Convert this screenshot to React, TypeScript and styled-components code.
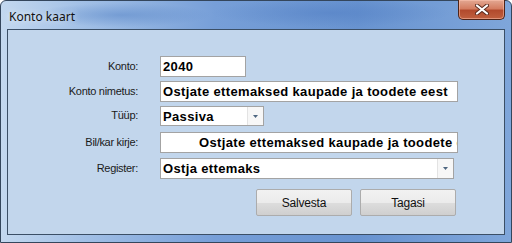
import React from 'react';
import styled, { createGlobalStyle } from 'styled-components';

const GlobalStyle = createGlobalStyle`
    html, body {
        margin: 0;
        padding: 0;
        background: #ffffff;
    }
`;

const Window = styled.div`
    box-sizing: border-box;
    width: 512px;
    height: 243px;
    display: flex;
    flex-direction: column;
    border: 1px solid #34465c;
    border-radius: 6px 6px 0 0;
    padding: 0 6px 7px 6px;
    background:
        radial-gradient(ellipse 90px 12px at 120px 14px, rgba(90, 135, 200, 0.55), transparent),
        radial-gradient(ellipse 120px 14px at 330px 12px, rgba(80, 125, 195, 0.5), transparent),
        linear-gradient(to right, #c3d8ef 0%, #a2c0e6 16%, #779fd8 42%, #6893d0 70%, #7fa6da 100%);
`;

const TitleBar = styled.div`
    height: 28px;
    display: flex;
    justify-content: space-between;
    align-items: flex-start;
    flex-shrink: 0;
`;

const Title = styled.span`
    margin: 7px 0 0 2px;
    font-family: "Noto Sans", "Open Sans", sans-serif;
    font-size: 12px;
    color: #111;
    text-shadow: 0 0 6px rgba(255, 255, 255, 0.9);
`;

const CloseButton = styled.div`
    box-sizing: border-box;
    width: 47px;
    height: 20px;
    margin-top: -1px;
    border: 1px solid #4e2418;
    border-top: none;
    border-radius: 0 0 5px 5px;
    background: linear-gradient(to bottom, #e3a893 0%, #d47d61 45%, #b24a2d 55%, #c0603f 100%);
    box-shadow: inset 0 0 0 1px rgba(255, 200, 180, 0.5);
    display: flex;
    align-items: center;
    justify-content: center;
`;

const Client = styled.div`
    flex: 1;
    border: 1px solid #3b4f66;
    background: #c2d6ec;
    padding-top: 26px;
    display: flex;
    flex-direction: column;
`;

const Form = styled.div`
    display: grid;
    grid-template-columns: 130px auto;
    column-gap: 22px;
    align-items: center;
`;

interface RowProps {
    top?: number;
}

const Label = styled.div<RowProps>`
    margin-top: ${props => props.top || 0}px;
    margin-bottom: 2px;
    text-align: right;
    font-family: "Liberation Sans", Arial, sans-serif;
    font-size: 11px;
    letter-spacing: -0.3px;
    color: #1a1a1a;
`;

interface FieldProps extends RowProps {
    w: number;
    h?: number;
}

const Field = styled.div<FieldProps>`
    box-sizing: border-box;
    margin-top: ${props => props.top || 0}px;
    width: ${props => props.w}px;
    height: ${props => props.h || 21}px;
    border: 1px solid #a3a3a3;
    background: #fff;
    display: flex;
    align-items: center;
    overflow: hidden;
`;

const FieldText = styled.span<{ indent?: number }>`
    flex: 1;
    padding-left: ${props => props.indent || 2}px;
    font-family: "Liberation Sans", Arial, sans-serif;
    font-weight: bold;
    font-size: 13px;
    letter-spacing: 0.35px;
    color: #000;
    white-space: nowrap;
    overflow: hidden;
`;

const DropButton = styled.div`
    width: 15px;
    align-self: stretch;
    border-left: 1px solid #e3e3e3;
    background: #f7f7f7;
    display: flex;
    align-items: center;
    justify-content: center;
`;

const Buttons = styled.div`
    display: flex;
    justify-content: flex-end;
    gap: 8px;
    margin-top: 10px;
    padding-right: 48px;
`;

const Button = styled.div`
    box-sizing: border-box;
    width: 96px;
    height: 27px;
    border: 1px solid #acacac;
    border-radius: 2px;
    background: linear-gradient(to bottom, #f2f2f2 0%, #ebebeb 50%, #dddddd 51%, #cfcfcf 100%);
    display: flex;
    align-items: center;
    justify-content: center;
    font-family: "Liberation Sans", Arial, sans-serif;
    font-size: 12px;
    letter-spacing: -0.2px;
    color: #111;
`;

const Arrow = () => (
    <svg width="5" height="3" viewBox="0 0 5 3">
        <path d="M0 0H5L2.5 3Z" fill="#4d6680" />
    </svg>
);

const CloseIcon = () => (
    <svg width="14" height="11" viewBox="0 0 14 11">
        <path d="M2 1.5L12 9.5M12 1.5L2 9.5" stroke="#5a2a1e" strokeWidth="4" strokeLinecap="round" />
        <path d="M2 1.5L12 9.5M12 1.5L2 9.5" stroke="#fff" strokeWidth="2.2" strokeLinecap="round" />
    </svg>
);

export default function App() {
    return (
        <>
            <GlobalStyle />
            <Window>
                <TitleBar>
                    <Title>Konto kaart</Title>
                    <CloseButton><CloseIcon /></CloseButton>
                </TitleBar>
                <Client>
                    <Form>
                        <Label>Konto:</Label>
                        <Field w={86}><FieldText>2040</FieldText></Field>

                        <Label top={4}>Konto nimetus:</Label>
                        <Field w={298} top={4}><FieldText>Ostjate ettemaksed kaupade ja toodete eest</FieldText></Field>

                        <Label top={4}>Tüüp:</Label>
                        <Field w={104} h={20} top={4}>
                            <FieldText>Passiva</FieldText>
                            <DropButton><Arrow /></DropButton>
                        </Field>

                        <Label top={6}>Bil/kar kirje:</Label>
                        <Field w={298} top={6}><FieldText indent={38}>Ostjate ettemaksed kaupade ja toodete eest</FieldText></Field>

                        <Label top={5}>Register:</Label>
                        <Field w={294} top={5}>
                            <FieldText>Ostja ettemaks</FieldText>
                            <DropButton><Arrow /></DropButton>
                        </Field>
                    </Form>
                    <Buttons>
                        <Button>Salvesta</Button>
                        <Button>Tagasi</Button>
                    </Buttons>
                </Client>
            </Window>
        </>
    );
}
